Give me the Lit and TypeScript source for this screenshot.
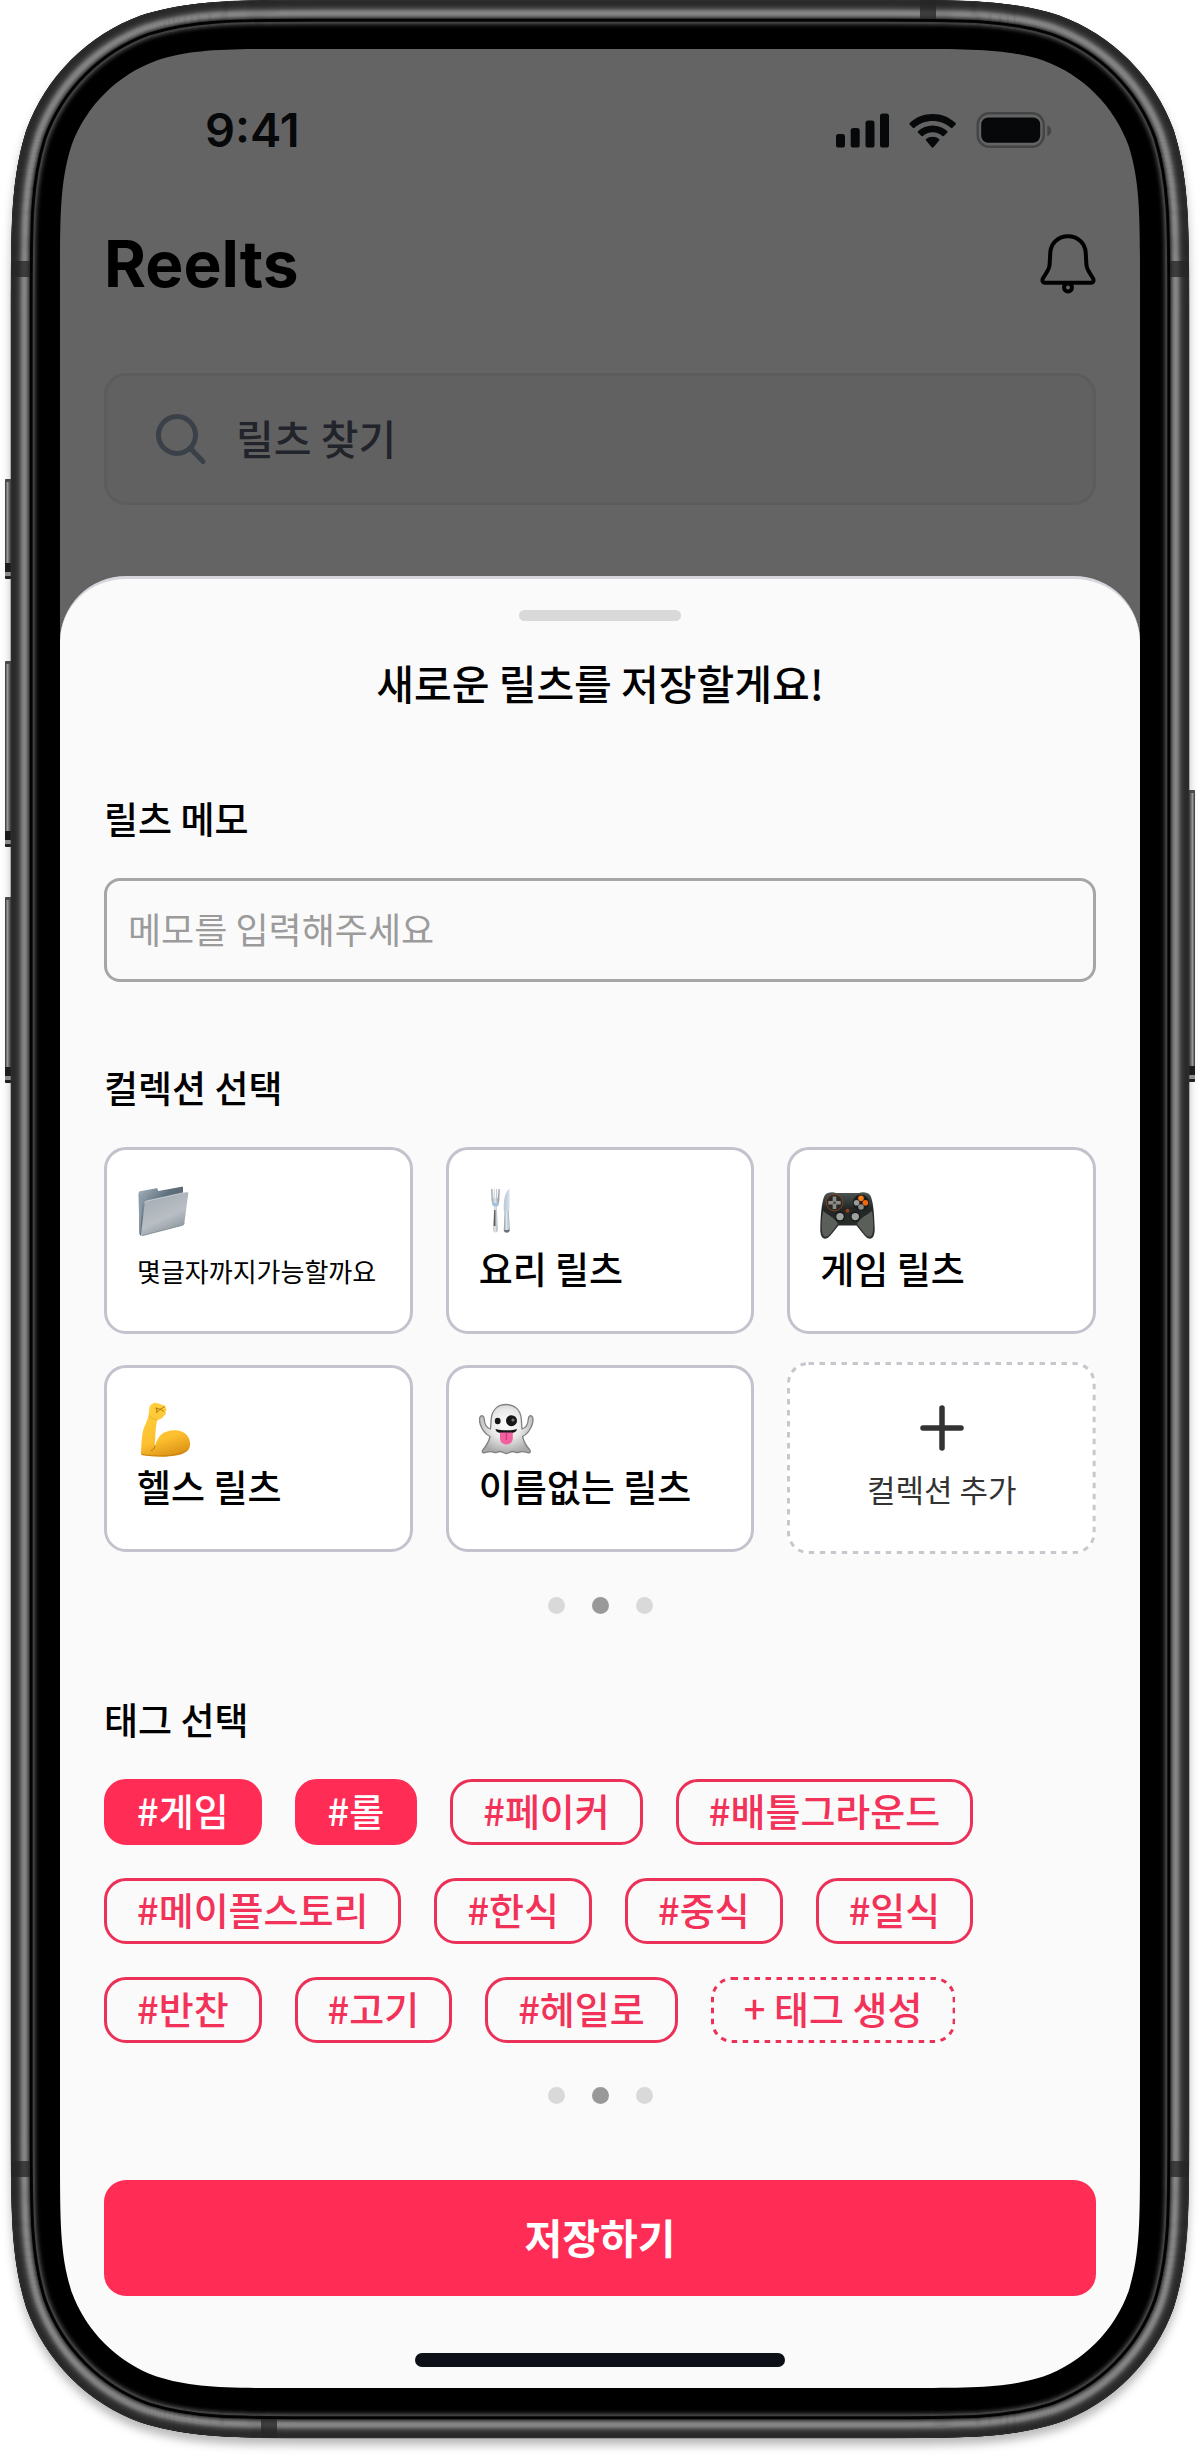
import { LitElement, html, svg, css } from "lit";
import { customElement, state } from "lit/decorators.js";
import { classMap } from "lit/directives/class-map.js";

/** Rounded rectangle path with continuous-curvature corners. */
function squircle(x: number, y: number, w: number, h: number, r: number): string {
  const a = 1.5287 * r, b = 1.0885 * r, c = 0.8684 * r, d = 0.6315 * r;
  const e = 0.0749 * r, f = 0.3728 * r, g = 0.1691 * r;
  const X = x + w, Y = y + h;
  return [
    `M${x + a} ${y}L${X - a} ${y}`,
    `C${X - b} ${y} ${X - c} ${y} ${X - d} ${y + e}`,
    `C${X - f} ${y + g} ${X - g} ${y + f} ${X - e} ${y + d}`,
    `C${X} ${y + c} ${X} ${y + b} ${X} ${y + a}`,
    `L${X} ${Y - a}`,
    `C${X} ${Y - b} ${X} ${Y - c} ${X - e} ${Y - d}`,
    `C${X - g} ${Y - f} ${X - f} ${Y - g} ${X - d} ${Y - e}`,
    `C${X - c} ${Y} ${X - b} ${Y} ${X - a} ${Y}`,
    `L${x + a} ${Y}`,
    `C${x + b} ${Y} ${x + c} ${Y} ${x + d} ${Y - e}`,
    `C${x + f} ${Y - g} ${x + g} ${Y - f} ${x + e} ${Y - d}`,
    `C${x} ${Y - c} ${x} ${Y - b} ${x} ${Y - a}`,
    `L${x} ${y + a}`,
    `C${x} ${y + b} ${x} ${y + c} ${x + e} ${y + d}`,
    `C${x + g} ${y + f} ${x + f} ${y + g} ${x + d} ${y + e}`,
    `C${x + c} ${y} ${x + b} ${y} ${x + a} ${y}Z`,
  ].join("");
}

/* Grey level of each one-pixel ring of the metal band, outside to inside. */
const RINGS = [
  48, 42, 42, 43, 45, 48, 54, 62, 72, 88, 106, 120, 130, 134, 132, 122, 104, 84, 60,
  2, 2, 6, 66, 62, 40, 28, 16, 8, 2,
];
const OUT = { x: 11, y: 0, w: 1178, h: 2438, r: 206 };

const ring = (i: number, level: number) => svg`<path
  d=${squircle(OUT.x + i + 0.5, OUT.y + i + 0.5, OUT.w - 2 * i - 1, OUT.h - 2 * i - 1, OUT.r - i)}
  fill="none" stroke=${`rgb(${level},${level},${level})`} stroke-width="1.6"/>`;

const sideKey = (x: number, y: number, h: number, flip: boolean) => svg`<g>
  <rect x=${x} y=${y} width="8" height=${h} rx="2" fill=${flip ? "url(#keyR)" : "url(#keyL)"}/>
  <rect x=${x} y=${y} width="8" height="3" rx="1" fill="#4a4a4a"/>
  <rect x=${x} y=${y + h - 16} width="8" height="9" fill="#1c1c1c"/>
  <rect x=${x} y=${y + h - 7} width="8" height="4" fill="#8c8c8c"/>
  <rect x=${x} y=${y + h - 3} width="8" height="3" rx="1" fill="#222"/>
</g>`;

/* Solid silhouette behind the screen; it only casts the shadow. */
const deviceShadow = html`<svg class="device shadow" viewBox="0 0 1200 2460" preserveAspectRatio="none" aria-hidden="true">
  <path d=${squircle(OUT.x, OUT.y, OUT.w, OUT.h, OUT.r)}/>
</svg>`;

const deviceFrame = html`<svg class="device" viewBox="0 0 1200 2460" preserveAspectRatio="none" aria-hidden="true">
  <defs>
    <linearGradient id="keyL"><stop offset="0" stop-color="#333"/><stop offset=".3" stop-color="#999"/><stop offset=".6" stop-color="#555"/><stop offset="1" stop-color="#2a2a2a"/></linearGradient>
    <linearGradient id="keyR"><stop offset="0" stop-color="#2a2a2a"/><stop offset=".4" stop-color="#555"/><stop offset=".7" stop-color="#999"/><stop offset="1" stop-color="#333"/></linearGradient>
  </defs>
  ${sideKey(5, 479, 100, false)}
  ${sideKey(5, 661, 186, false)}
  ${sideKey(5, 897, 186, false)}
  ${sideKey(1187, 790, 292, true)}
  <path class="bezel" fill-rule="evenodd"
    d=${squircle(OUT.x, OUT.y, OUT.w, OUT.h, OUT.r) + squircle(60, 49, 1080, 2339, 153)}/>
  ${RINGS.map((level, i) => ring(i, level))}
  <g fill="#262626" fill-opacity=".75">
    <rect x="11" y="261" width="19" height="16"/>
    <rect x="1170" y="261" width="19" height="16"/>
    <rect x="11" y="2161" width="19" height="16"/>
    <rect x="1170" y="2161" width="19" height="16"/>
    <rect x="920" y="0" width="16" height="19"/>
    <rect x="261" y="2419" width="16" height="19"/>
  </g>
</svg>`;

const statusIcons = html`<svg class="status-icons" width="216" height="36" viewBox="836 112 216 36" role="img" aria-label="신호, Wi-Fi, 배터리">
  <g fill="#060809">
    <rect x="836" y="134" width="9" height="13.5" rx="2.6"/>
    <rect x="850.7" y="128" width="9" height="19.5" rx="2.6"/>
    <rect x="865.5" y="120.6" width="9" height="26.9" rx="2.6"/>
    <rect x="880" y="113.6" width="9" height="33.9" rx="2.6"/>
    <path d="M932.6 114C923.800 114 915.700 117.300 909.700 122.900C909.200 123.400 909.200 124.100 909.700 124.600L912.800 127.800C913.300 128.300 914 128.300 914.500 127.800C919.200 123.500 925.600 120.900 932.600 120.900C939.600 120.900 946 123.500 950.800 127.800C951.300 128.300 952 128.300 952.500 127.800L955.600 124.600C956.100 124.100 956.100 123.400 955.600 122.900C949.500 117.300 941.400 114 932.600 114Z"/>
    <path d="M932.600 125.400C927 125.400 921.900 127.500 918.100 131C917.600 131.500 917.600 132.200 918.100 132.700L921.200 135.800C921.700 136.300 922.400 136.300 922.900 135.900C925.500 133.600 928.900 132.200 932.600 132.200C936.400 132.200 939.800 133.600 942.400 135.900C942.900 136.300 943.600 136.300 944.100 135.800L947.200 132.700C947.700 132.200 947.700 131.500 947.200 131C943.300 127.500 938.200 125.400 932.600 125.400Z"/>
    <path d="M932.600 136.800C930.200 136.800 928 137.600 926.200 139C925.700 139.400 925.700 140.100 926.100 140.600L931.700 147.200C932.200 147.800 933 147.800 933.500 147.200L939.100 140.600C939.500 140.100 939.500 139.400 939 139C937.200 137.600 935 136.800 932.600 136.800Z"/>
    <rect x="981.200" y="117.500" width="59" height="25.300" rx="7"/>
  </g>
  <rect x="977.700" y="113.200" width="66" height="33.500" rx="11.500" fill="none" stroke="#444546" stroke-width="2.400"/>
  <path d="M1047.300 125.300V136.300C1049.800 135.300 1051.300 133.200 1051.300 130.800S1049.800 126.300 1047.300 125.300Z" fill="#444546"/>
</svg>`;

const bellIcon = html`<svg width="56" height="60" viewBox="0 0 56 60" fill="none" stroke="#000" stroke-width="4" stroke-linejoin="round" aria-hidden="true">
  <path d="M28 2.200C18 2.200 10.800 9.500 10.300 18.500L9.600 30.500C9.500 33 8.800 35 7.500 37L2.900 44.500C1.800 46.500 2.700 48.800 5 48.800H51C53.300 48.800 54.200 46.500 53.100 44.500L48.500 37C47.200 35 46.500 33 46.400 30.500L45.700 18.500C45.200 9.500 38 2.200 28 2.200Z"/>
  <circle cx="28" cy="53.500" r="4"/>
</svg>`;

const searchIcon = html`<svg class="search-icon" width="50" height="50" viewBox="0 0 50 50" fill="none" stroke="#3a4149" stroke-width="5" stroke-linecap="round" aria-hidden="true">
  <circle cx="21" cy="21" r="18.500"/><path d="M35 35L47 47.500"/>
</svg>`;

const plusIcon = html`<svg width="44" height="46" viewBox="0 0 44 46" stroke="#333" stroke-width="5.500" stroke-linecap="round" aria-hidden="true">
  <path d="M22 3V43M3 23H41"/>
</svg>`;

/* Evenly dashed outline that fills the button it sits in. */
const dashedOutline = html`<svg class="outline" aria-hidden="true"><rect/></svg>`;

const folder = svg`
  <defs>
    <linearGradient id="fBack" x1="0" y1="0" x2="1" y2="1"><stop offset="0" stop-color="#a9b6c0"/><stop offset=".4" stop-color="#5f707d"/><stop offset="1" stop-color="#45535f"/></linearGradient>
    <linearGradient id="fFront" x1=".2" y1="0" x2=".7" y2="1"><stop offset="0" stop-color="#a3abb2"/><stop offset=".6" stop-color="#b8bec4"/><stop offset="1" stop-color="#858e96"/></linearGradient>
  </defs>
  <path d="M59 70Q59 66 63 65L112 56Q116 55 116 60L118 64L188 51Q192 50 192 54V78L80 185L66 198Q61 197 61 190Z" fill="url(#fBack)"/>
  <path d="M59 70L70 90L64 190L61 190Z" fill="#8b9ba7"/>
  <path d="M77 100Q78 95 83 94L203 67Q208 66 208 71L196 160Q195 166 190 167L70 198Q65 199 66 193Z" fill="url(#fFront)"/>
  <path d="M77 100Q78 95 83 94L203 67Q208 66 208 71" fill="none" stroke="#dfe4e8" stroke-width="2"/>
  <path d="M196 160Q195 166 190 167L70 198" fill="none" stroke="#6c7780" stroke-width="2"/>`;

const arm = svg`
  <defs><linearGradient id="aSkin" x1=".3" y1="0" x2=".6" y2="1"><stop offset="0" stop-color="#ffcf3d"/><stop offset=".65" stop-color="#fdc02f"/><stop offset="1" stop-color="#dc9215"/></linearGradient></defs>
  <path d="M91 712C92 704 100 697 109 696C116 697 126 701 134 704C139 705 141 708 139 711C144 715 143 719 140 722C142 728 139 734 134 736C131 743 124 746 115 748C111 760 110 780 109 797C109 810 106 820 108 826C114 806 124 788 142 783C165 775 194 779 206 797C215 810 216 828 207 839C194 853 168 856 142 858C118 860 92 856 70 854C65 853 66 849 66 844C67 822 68 800 72 780C78 762 86 748 89 734Z" fill="url(#aSkin)"/>
  <path d="M108 826C106 834 102 838 97 840M111 712L124 716L136 709M113 724L124 716M112 712L114 726M124 716L134 722" fill="none" stroke="#a86a0c" stroke-width="2.500" stroke-linecap="round"/>
  <path d="M89 734C96 742 105 746 115 748" fill="none" stroke="#e0a024" stroke-width="2"/>
  <path d="M68 851C100 858 180 860 205 838" fill="none" stroke="#c27d10" stroke-width="2.500"/>`;

const cutlery = svg`
  <defs>
    <linearGradient id="cSteel"><stop offset="0" stop-color="#8d9299"/><stop offset=".45" stop-color="#e3e8ec"/><stop offset="1" stop-color="#85898f"/></linearGradient>
    <linearGradient id="cBlade"><stop offset="0" stop-color="#b5c6d6"/><stop offset="1" stop-color="#d8e2ea"/></linearGradient>
  </defs>
  <path d="M12.200 5L12.600 16Q13 21.500 15 23L14.200 46Q14.500 48.700 16.500 48.700T18.800 46L17.800 23Q20 21.500 20.300 16L20.700 5H19.500L18.900 14H18.300L18 5H17L16.800 14H16.200L15.900 5H14.900L14.600 14H14L13.500 5Z" fill="url(#cSteel)"/>
  <path d="M13 17Q14 22.500 16.500 22.500T20 17L18.500 19H14.500Z" fill="#9cc4e6"/>
  <path d="M15.200 26L14.600 42H16.500V26Z" fill="#5e5a56"/>
  <path d="M30.600 4.500V27H24.800C24.500 17 25.500 8 30.600 4.500Z" fill="url(#cBlade)"/>
  <path d="M25.500 27H29.800L30.700 46.500Q30.500 48.700 27.700 48.700T24.800 46.500Z" fill="url(#cSteel)"/>
  <path d="M28 28L28.500 45H30L29.300 28Z" fill="#b9d6ec"/>
  <path d="M25 46H30.600Q30 48.700 27.700 48.700T25 46Z" fill="#6c6f73"/>`;

const gamepad = svg`
  <defs><linearGradient id="gBody" x1="0" y1="0" x2="0" y2="1"><stop offset="0" stop-color="#4d5652"/><stop offset=".35" stop-color="#222725"/><stop offset="1" stop-color="#2c2f2d"/></linearGradient></defs>
  <path d="M5 11C7 8 13 7.500 16 9H39C42 7.500 48 8 50 11C53 15 54.300 30 54.700 44C55 51 53 54.700 50 54.700C47 54.700 45 52 42.500 49L36.500 41.500H18.500L12.500 49C10 52 8 54.700 5 54.700C2 54.700 0 51 .3 44C.7 30 2 15 5 11Z" fill="url(#gBody)"/>
  <path d="M3 27C8 31 15 34 18 40L11 49C8 53 5 54 3 51C1 46 1.500 36 3 27ZM52 27C47 31 40 34 37 40L44 49C47 53 50 54 52 51C54 46 53.500 36 52 27Z" fill="#5b5f5a"/>
  <circle cx="14.500" cy="18.700" r="8.200" fill="#2a2725" stroke="#7d4322" stroke-width="1"/>
  <path d="M12.700 12.500H16.300V16.900H20.700V20.500H16.300V24.900H12.700V20.500H8.300V16.900H12.700Z" fill="#8a8c88"/>
  <circle cx="14.500" cy="18.700" r="1.500" fill="#4b4d4a"/>
  <circle cx="41" cy="18.700" r="8.200" fill="#1b1d1c"/>
  <circle cx="41" cy="14.200" r="2.800" fill="#f47a16"/><circle cx="45.400" cy="18.700" r="2.800" fill="#f4660c"/>
  <circle cx="36.600" cy="18.700" r="2.800" fill="#9a9c99"/><circle cx="41" cy="23" r="2.800" fill="#8a8c89"/>
  <circle cx="27.500" cy="26.700" r="1.900" fill="#9a3f16"/>
  <circle cx="20" cy="32.600" r="5" fill="#151716"/><circle cx="20" cy="32.600" r="3.700" fill="#9fa19f"/>
  <circle cx="35.300" cy="32.600" r="5" fill="#151716"/><circle cx="35.300" cy="32.600" r="3.700" fill="#9fa19f"/>`;

const ghost = svg`
  <defs><radialGradient id="hBody" cx=".5" cy=".4" r=".6"><stop offset="0" stop-color="#fff"/><stop offset=".5" stop-color="#e9e9e9"/><stop offset="1" stop-color="#a9a9a9"/></radialGradient></defs>
  <path d="M27.300 2.500C36 2.500 41.500 8 42.300 17C42.700 21 42.500 24 43.200 27C46.500 26 49 22 49.300 17C49.400 14 52 12.500 53.500 15C55.500 20 51 31 43.600 34.500C44.500 39 46.500 43 50.800 48C52 50 51 51.200 48.500 50.600C45.500 50 43 49 40.300 50.200C37.500 51.500 36 49.500 33.500 49.500C31 49.500 30 51.500 27.300 51.500S23.500 49.500 21 49.500C18.500 49.500 17 51.500 14.200 50.200C11.500 49 9 50 6 50.600C3.500 51.200 2.500 50 3.800 48C8 43 10 39 11 34.500C3.500 31 -1 20 1 15C2.500 12.500 5 14 5.200 17C5.500 22 8 26 11.300 27C12 24 11.800 21 12.200 17C13 8 18.500 2.500 27.300 2.500Z" fill="url(#hBody)" stroke="#808080" stroke-width="1.300"/>
  <ellipse cx="18.700" cy="19" rx="2.900" ry="3.300" fill="#161616"/>
  <circle cx="32.500" cy="18.700" r="5.500" fill="#161616"/><circle cx="34" cy="18" r="1.600" fill="#777"/>
  <path d="M16.500 27C22 28.800 32.500 28.800 38 27C37.500 30.500 34 31.500 27.300 31.500S17 30.500 16.500 27Z" fill="#161616"/>
  <path d="M21 30.500H33.800V36.500C33.800 40 31 42.500 27.400 42.500S21 40 21 36.500Z" fill="#f2619f"/>
  <path d="M27.400 31V38" stroke="#c93c78" stroke-width="1.200"/>`;

interface Collection {
  name: string;
  box: string;
  art: unknown;
  long?: boolean;
}

const COLLECTIONS: Collection[] = [
  { name: "몇글자까지가능할까요", box: "54 43 165 165", art: folder, long: true },
  { name: "요리 릴츠", box: "0 0 55 55", art: cutlery },
  { name: "게임 릴츠", box: "0 0 55 55", art: gamepad },
  { name: "헬스 릴츠", box: "54 694 165 165", art: arm },
  { name: "이름없는 릴츠", box: "0 0 55 55", art: ghost },
];

const TAGS = ["게임", "롤", "페이커", "배틀그라운드", "메이플스토리", "한식", "중식", "일식", "반찬", "고기", "헤일로"];

const controlReset = css`
  * { box-sizing: border-box; }
  button, input { margin: 0; font: inherit; color: inherit; }
  button { cursor: pointer; }
`;

@customElement("page-dots")
export class PageDots extends LitElement {
  static styles = [controlReset, css`
    :host { display: flex; justify-content: center; gap: 27px; }
    .dot { width: 17px; height: 17px; padding: 0; border: 0; border-radius: 50%; background: #d9d9d9; }
    .dot.current { background: #999; }
  `];

  @state() private current = 1;

  render() {
    return [0, 1, 2].map((i) => html`<button
      class=${classMap({ dot: true, current: i === this.current })}
      aria-label=${`${i + 1} 페이지`} @click=${() => (this.current = i)}></button>`);
  }
}

@customElement("app-root")
export class AppRoot extends LitElement {
  static styles = [controlReset, css`
    :host {
      display: block;
      position: relative;
      min-height: 100vh;
      padding: 49px 5% 72px;
      overflow: hidden;
      box-sizing: border-box;
      background: #fff;
      color: #000;
      font: 500 37px/48px "Noto Sans CJK KR", sans-serif;
    }
    .device {
      position: absolute;
      inset: 0;
      width: 100%;
      height: 100%;
      pointer-events: none;
    }
    .shadow { filter: drop-shadow(0 7px 5px rgba(0, 0, 0, 0.28)); }
    .bezel { fill: #000; }
    .screen {
      position: relative;
      display: flex;
      flex-direction: column;
      border-radius: 140px;
      overflow: hidden;
      background: #646464;
    }
    .status {
      display: flex;
      align-items: center;
      justify-content: space-between;
      height: 162px;
      padding: 0 88px 0 145px;
      font: 600 47px/56px Inter, sans-serif;
      color: #060809;
    }
    .top {
      display: flex;
      align-items: center;
      justify-content: space-between;
      height: 106px;
      padding: 0 44px;
    }
    .brand { margin: 0; font: 700 64px/76px Inter, sans-serif; }
    .bell { display: flex; padding: 0; border: 0; background: none; }
    .search {
      display: flex;
      align-items: center;
      gap: 30px;
      height: 132px;
      margin: 56px 44px 71px;
      padding: 0 49px;
      border: 3px solid #5b5c5e;
      border-radius: 22px;
      background: #616161;
      font-size: 41px;
    }
    .search-icon { flex: none; }
    .search-input {
      flex: 1;
      min-width: 0;
      padding: 0 0 4px;
      border: 0;
      outline: 0;
      background: none;
      color: #22242c;
    }
    .search-input::placeholder { color: #22242c; opacity: 1; }

    .sheet {
      display: flex;
      flex-direction: column;
      flex: 1;
      padding: 31px 44px 21px;
      border-top: 3px solid #d6d6de;
      border-radius: 66px 66px 0 0;
      background: #fafafa;
    }
    .grabber { align-self: center; width: 162px; height: 11px; border-radius: 6px; background: #d9d9d9; }
    .title { margin: 31px 0 82px; font-size: 41px; line-height: 60px; font-weight: 500; text-align: center; }
    .section { display: flex; flex-direction: column; margin-bottom: 81px; }
    .section.tags { margin-bottom: 76px; }
    .heading { margin: 0 0 36px; font-size: 37px; line-height: 48px; font-weight: 500; }
    .memo {
      width: 100%;
      height: 104px;
      padding: 0 21px 4px;
      border: 3px solid #a6a6a6;
      border-radius: 16px;
      outline: 0;
      background: #fafafa;
      font-size: 36px;
      font-weight: 400;
    }
    .memo::placeholder { color: #9b9b9b; opacity: 1; }

    .grid {
      display: grid;
      grid-template-columns: repeat(3, minmax(0, 1fr));
      align-items: center;
      gap: 28px 33px;
      margin-bottom: 43px;
    }
    .card {
      display: flex;
      flex-direction: column;
      align-items: flex-start;
      gap: 3px;
      height: 187px;
      padding: 34px 30px 0;
      border: 3px solid #c4c2cc;
      border-radius: 22px;
      background: #fff;
      font-weight: 500;
      line-height: 52px;
      white-space: nowrap;
    }
    .card.long { gap: 6px; font-size: 26px; font-weight: 400; }
    .card.add {
      position: relative;
      align-items: center;
      gap: 12px;
      height: 192px;
      padding: 40px 30px 0;
      border-color: transparent;
      font-size: 31px;
      font-weight: 400;
      color: #333;
    }
    .outline {
      position: absolute;
      inset: -3px;
      width: calc(100% + 6px);
      height: calc(100% + 6px);
      pointer-events: none;
    }
    .outline rect {
      x: 1.5px;
      y: 1.5px;
      width: calc(100% - 3px);
      height: calc(100% - 3px);
      rx: 20px;
      fill: none;
      stroke: #ec3158;
      stroke-width: 3px;
      stroke-dasharray: 5.5 5.5;
    }
    .add .outline rect { stroke: #c8c7cd; }
    .tag-list { display: flex; flex-wrap: wrap; gap: 33px; margin-bottom: 44px; }
    .tag {
      height: 66px;
      padding: 0 30px 4px;
      border: 3px solid #ec3158;
      border-radius: 22px;
      background: none;
      color: #f23259;
      font-size: 38px;
      font-weight: 500;
    }
    .tag.on { border-color: #ff2d55; background: #ff2d55; color: #fff; }
    .tag.new { position: relative; border-color: transparent; }
    .save {
      height: 116px;
      padding: 0 0 4px;
      border: 0;
      border-radius: 22px;
      background: #ff2d55;
      color: #fff;
      font-size: 41px;
      font-weight: 700;
    }
    .home { align-self: center; width: 370px; height: 14px; margin-top: 57px; border-radius: 7px; background: #0d1017; }
  `];

  @state() private selected = new Set(["게임", "롤"]);

  private toggle(tag: string) {
    const next = new Set(this.selected);
    if (!next.delete(tag)) next.add(tag);
    this.selected = next;
  }

  render() {
    return html`
      ${deviceShadow}
      <main class="screen">
        <div class="status"><span>9:41</span>${statusIcons}</div>
        <header class="top">
          <h1 class="brand">Reelts</h1>
          <button class="bell" aria-label="알림">${bellIcon}</button>
        </header>
        <label class="search">
          ${searchIcon}
          <input class="search-input" type="search" placeholder="릴츠 찾기" aria-label="릴츠 찾기">
        </label>
        <div class="sheet">
          <div class="grabber"></div>
          <h2 class="title">새로운 릴츠를 저장할게요!</h2>
          <section class="section">
            <label class="heading" for="memo">릴츠 메모</label>
            <input class="memo" id="memo" type="text" placeholder="메모를 입력해주세요">
          </section>
          <section class="section">
            <h3 class="heading">컬렉션 선택</h3>
            <div class="grid">
              ${COLLECTIONS.map((c) => html`
                <button class=${classMap({ card: true, long: !!c.long })}>
                  <svg width="55" height="55" viewBox=${c.box} aria-hidden="true">${c.art}</svg>
                  <span>${c.name}</span>
                </button>`)}
              <button class="card add">${plusIcon}<span>컬렉션 추가</span>${dashedOutline}</button>
            </div>
            <page-dots></page-dots>
          </section>
          <section class="section tags">
            <h3 class="heading">태그 선택</h3>
            <div class="tag-list">
              ${TAGS.map((t) => html`<button
                class=${classMap({ tag: true, on: this.selected.has(t) })}
                aria-pressed=${this.selected.has(t) ? "true" : "false"}
                @click=${() => this.toggle(t)}>#${t}</button>`)}
              <button class="tag new">+ 태그 생성${dashedOutline}</button>
            </div>
            <page-dots></page-dots>
          </section>
          <button class="save">저장하기</button>
          <div class="home"></div>
        </div>
      </main>
      ${deviceFrame}
    `;
  }
}
